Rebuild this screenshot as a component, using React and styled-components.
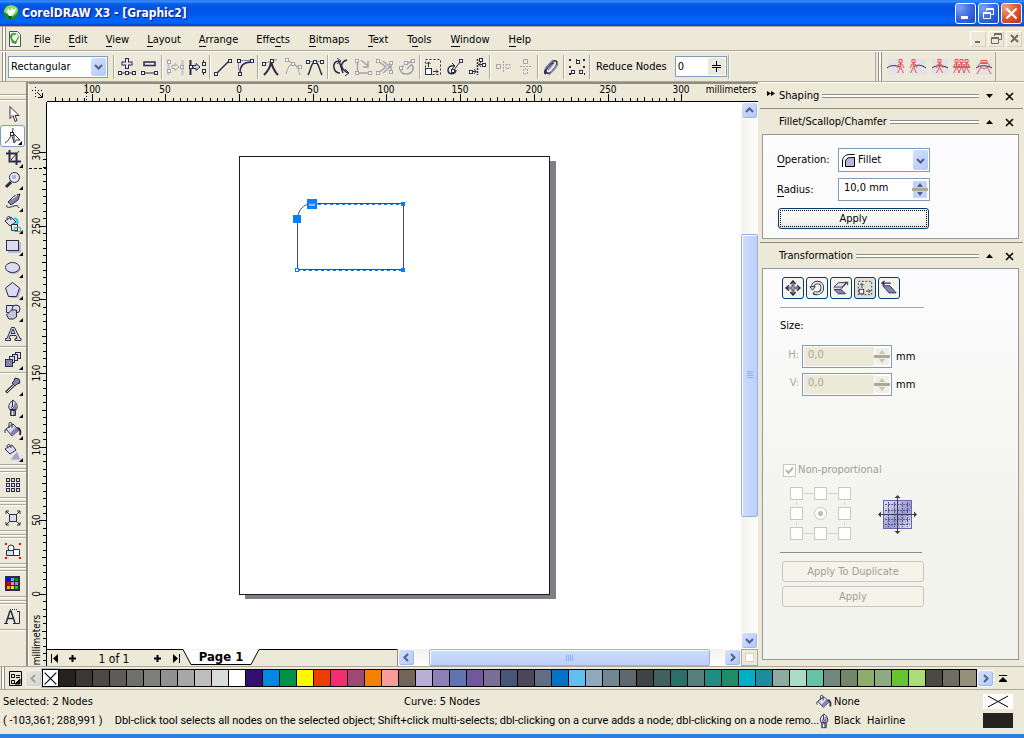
import React from 'react';
import styled, { createGlobalStyle, css } from 'styled-components';

const INK = '#2b2c46';
const MID = '#8484b4';
const PALE = '#dcdcf0';
const GREY = '#a3a2ac';

const GlobalStyle = createGlobalStyle`
  * {
    box-sizing: border-box;
  }
  body {
    margin: 0;
    background: #ece9d8;
  }
  body, button, input, select {
    font-family: 'DejaVu Sans Condensed', 'Noto Sans', sans-serif;
    font-size: 11px;
    line-height: 14px;
    color: #000;
  }
  button, input, select {
    margin: 0;
    padding: 0;
    border: 0;
    border-radius: 0;
    background: none;
    appearance: none;
    outline: none;
  }
  button {
    display: flex;
    align-items: center;
    justify-content: center;
  }
  u {
    text-decoration: none;
    border-bottom: 1px solid #000;
  }
  svg {
    display: block;
    flex: none;
  }
`;

const Shell = styled.div`
  height: 100vh;
  display: flex;
  flex-direction: column;
  overflow: hidden;
  background: #ece9d8;
`;

const TitleBar = styled.header`
  flex: none;
  height: 26px;
  padding: 0 2px 0 3px;
  display: flex;
  align-items: center;
  background: linear-gradient(#1c6fe8 0, #3a93ff 1px, #0a5ce4 4px, #0054e3 8px, #0058ea 14px, #0066ff 20px, #0062f8 23px, #003fc4 26px);
`;

const Title = styled.h1`
  flex: 1;
  margin: 0 0 0 3px;
  font-family: 'DejaVu Sans Condensed', 'Noto Sans', sans-serif;
  font-size: 12px;
  line-height: 16px;
  font-weight: bold;
  color: #fff;
  text-shadow: 1px 1px 1px #0f1089;
`;

const CaptionButton = styled.button`
  width: 21px;
  height: 21px;
  margin-left: 2px;
  border: 1px solid #fff;
  border-radius: 3px;
  background: ${(p) =>
    p.$danger
      ? 'radial-gradient(circle at 20% 20%, #f0a080, #dd5030 55%, #b8330f)'
      : 'radial-gradient(circle at 20% 20%, #7ea2f4, #3565e0 55%, #1b48c4)'};
`;

const MenuBar = styled.nav`
  flex: none;
  height: 25px;
  display: flex;
  align-items: center;
  border-top: 1px solid #aca899;
  border-bottom: 1px solid #aca899;
  padding-left: 2px;
`;

const Grip = styled.div`
  flex: none;
  align-self: stretch;
  width: 4px;
  border: solid #8f8c7f;
  border-width: 0 1px;
  background: #fff;
`;

const MenuItems = styled.div`
  flex: 1;
  display: flex;
  align-items: center;
  margin-left: 2px;
`;

const MenuItem = styled.button`
  padding: 5px 8px 3px 10px;
  &:first-of-type {
    padding-left: 12px;
  }
  &:nth-of-type(n + 7) {
    padding-left: 11px;
  }
`;

const MdiButton = styled.button`
  width: 16px;
  height: 16px;
  margin-right: 2px;
  border: 1px solid;
  border-color: #fff #d6d2c2 #d6d2c2 #fff;
`;

const ToolBar = styled.div`
  flex: none;
  height: 31px;
  display: flex;
  align-items: center;
  border-top: 1px solid #fff;
  border-bottom: 1px solid #aca899;
  padding-left: 2px;
`;

const SelectBox = styled.div`
  display: flex;
  align-items: center;
  width: ${(p) => p.$width};
  height: ${(p) => p.$height};
  padding: 1px 1px 1px 2px;
  border: 1px solid #7f9db9;
  background: #fff;
  select {
    flex: 1;
    min-width: 0;
    height: 100%;
    padding-left: ${(p) => (p.$icon ? 2 : 0)}px;
  }
`;

const DropArrow = styled.span`
  display: flex;
  align-items: center;
  justify-content: center;
  align-self: stretch;
  width: 15px;
  border-radius: 2px;
  background: linear-gradient(135deg, #d3e0fd, #b3c8f8);
`;

const Separator = styled.span`
  width: 2px;
  height: 24px;
  margin: 0 1px;
  border-left: 1px solid #aca899;
  border-right: 1px solid #fff;
`;

const ToolButton = styled.button`
  width: 22px;
  height: 22px;
`;

const ReduceLabel = styled.label`
  margin: 0 8px 0 4px;
  white-space: nowrap;
`;

const ReduceField = styled.div`
  display: flex;
  align-items: center;
  width: 52px;
  height: 21px;
  border: 1px solid #7f9db9;
  background: #fff;
  input {
    width: 30px;
    margin-left: 2px;
  }
  button {
    width: 17px;
    height: 17px;
    background: #ece9d8;
  }
`;

const NodeBar = styled.div`
  align-self: stretch;
  display: flex;
  align-items: center;
  margin-left: auto;
  margin-right: 28px;
  border-left: 1px solid #aca899;
  border-right: 1px solid #aca899;
  padding-left: 2px;
  button {
    height: 16px;
    border: solid #ece9d8;
    border-width: 0 3px;
    background: #e3e2e6;
  }
`;

const Main = styled.main`
  flex: 1;
  min-height: 0;
  display: flex;
`;

const ToolBox = styled.aside`
  flex: none;
  width: 28px;
  display: flex;
  flex-direction: column;
  border-right: 2px solid #8f8c7f;
  padding-top: 10px;
`;

const ToolGap = styled.div`
  flex: none;
  height: ${(p) => (p.$wide ? 11 : 4)}px;
  display: flex;
  flex-direction: column;
  justify-content: space-evenly;
  span {
    height: 2px;
    border-top: 1px solid #aca899;
    border-bottom: 1px solid #fff;
  }
`;

const Tool = styled.button`
  position: relative;
  flex: none;
  width: 25px;
  height: 22px;
  ${(p) =>
    p.$active &&
    css`
      border: 1px solid #7f9db9;
      border-radius: 3px;
      background: #fdfdfd;
    `}
`;

const Flyout = styled.span`
  position: absolute;
  right: 2px;
  bottom: 1px;
  border: 2px solid #000;
  border-top-color: transparent;
  border-left-color: transparent;
`;

const Workspace = styled.section`
  flex: 1;
  min-width: 0;
  display: flex;
  flex-direction: column;
  border-left: 1px solid #fff;
  border-top: 2px solid #8f8c7f;
`;

const Row = styled.div`
  display: flex;
  min-height: 0;
  flex: ${(p) => (p.$grow ? 1 : 'none')};
`;

const RulerCorner = styled.div`
  width: 18px;
  height: 18px;
  padding: 3px 3px;
`;

const TopRuler = styled.div`
  flex: 1;
  min-width: 0;
  height: 18px;
  overflow: hidden;
  border-bottom: 1px solid #000;
`;

const SideRuler = styled.div`
  width: 18px;
  overflow: hidden;
  border-right: 1px solid #000;
`;

const CanvasColumn = styled.div`
  flex: 1;
  min-width: 0;
  display: flex;
  flex-direction: column;
`;

const Canvas = styled.div`
  flex: 1;
  min-height: 0;
  min-width: 0;
  overflow: hidden;
  background: #fff;
`;

const ScrollTrack = styled.div`
  flex: ${(p) => (p.$vertical ? 'none' : 1)};
  width: ${(p) => (p.$vertical ? '17px' : 'auto')};
  display: flex;
  flex-direction: ${(p) => (p.$vertical ? 'column' : 'row')};
  background: ${(p) => (p.$vertical ? 'linear-gradient(90deg, #f3f1ec, #fefefb)' : 'linear-gradient(#f3f1ec, #fefefb)')};
`;

const ScrollButton = styled.button`
  flex: none;
  width: 17px;
  height: 17px;
  border: 1px solid #fff;
  border-radius: 3px;
  background: linear-gradient(135deg, #d3e0fd, #b3c8f8);
  box-shadow: inset -1px -1px 0 #a0b5e8;
  opacity: ${(p) => (p.disabled ? 0.5 : 1)};
  filter: ${(p) => (p.disabled ? 'grayscale(1)' : 'none')};
`;

const Thumb = styled.div`
  flex: ${(p) => p.$size};
  display: flex;
  align-items: center;
  justify-content: center;
  border: 1px solid #98b0e4;
  border-radius: 2px;
  background: linear-gradient(${(p) => (p.$vertical ? '90deg' : '180deg')}, #cddbff, #bdcffa);
  box-shadow: inset 1px 1px 0 #fff;
`;

const Space = styled.div`
  flex: ${(p) => p.$size};
`;

const PageBar = styled.div`
  flex: none;
  height: 17px;
  display: flex;
`;

const PageNav = styled.div`
  flex: none;
  width: 351px;
  display: flex;
  align-items: stretch;
  border-right: 1px solid #8f8c7f;
`;

const NavCell = styled.button`
  width: ${(p) => p.$width}px;
  border-top: 1px solid #000;
`;

const PageCount = styled.span`
  width: 64px;
  padding-top: 2px;
  text-align: center;
  font-size: 12px;
  border-top: 1px solid #000;
`;

const PageTab = styled.button`
  position: relative;
  width: 76px;
  height: 16px;
  font-size: 13px;
  font-weight: bold;
  svg {
    position: absolute;
    inset: 0;
  }
  span {
    position: relative;
  }
`;

const NavFill = styled.span`
  flex: 1;
  border-top: 1px solid #000;
`;

const Navigator = styled.button`
  width: 17px;
  border: 1px solid #aca899;
  span {
    width: 9px;
    height: 9px;
    background: #fff;
    border: 1px solid #d6d2c2;
  }
`;

const Docker = styled.aside`
  flex: none;
  width: 264px;
  margin-left: 2px;
  display: flex;
  flex-direction: column;
  padding-top: 1px;
  border-top: 1px solid #fff;
`;

const DockSection = styled.section`
  display: flex;
  flex-direction: column;
  flex: ${(p) => (p.$grow ? 1 : 'none')};
  margin-right: 1px;
  padding-right: 4px;
  border-bottom: ${(p) => (p.$grow ? 0 : '1px solid #8f8c7f')};
  padding-bottom: ${(p) => (p.$pad ? 3 : 0)}px;
  margin-bottom: ${(p) => (p.$grow ? 6 : 1)}px;
`;

const DockHeader = styled.div`
  display: flex;
  align-items: center;
  height: 24px;
  padding-left: 19px;
  h2 {
    margin: 0;
    font-size: 11px;
    font-weight: normal;
  }
  button {
    width: 20px;
    height: 18px;
  }
`;

const Chevrons = styled.span`
  width: 12px;
  margin-left: -12px;
  height: 10px;
`;

const Rule = styled.span`
  flex: 1;
  height: 4px;
  margin-left: 3px;
  border: solid #8f8c7f;
  border-width: 1px 0;
  background: #fff;
`;

const DockBody = styled.div`
  flex: ${(p) => (p.$grow ? 1 : 'none')};
  margin-left: 2px;
  border: 1px solid #919b9c;
  background: linear-gradient(#fcfcfe, ${(p) => (p.$grow ? '#f3f3ee 65%' : '#fafafa')});
`;

const FilletForm = styled.form`
  padding: 13px 0 9px 14px;
  display: grid;
  grid-template-columns: 61px 92px;
  row-gap: 6px;
  align-items: center;
  button {
    grid-column: 1 / 3;
  }
`;

const Spin = styled.div`
  display: flex;
  align-items: center;
  width: ${(p) => p.$width}px;
  height: 23px;
  padding: 1px;
  border: 1px solid #7f9db9;
  background: #fff;
  input {
    flex: 1;
    min-width: 0;
    height: 19px;
    padding: 0 0 4px 4px;
    background: ${(p) => (p.$off ? '#ece9d8' : '#fff')};
    color: ${(p) => (p.$off ? '#aca899' : '#000')};
  }
`;

const PushButton = styled.button`
  height: 21px;
  border: 1px solid #003c74;
  border-radius: 3px;
  background: linear-gradient(#fff, #f3f3ef 70%, #e2e0d6);
  margin: 1px 1px 0 1px;
  span {
    flex: 1;
    margin: 1px;
    border: 1px dotted #000;
    line-height: 15px;
  }
  &:disabled {
    width: 142px;
    margin: 0 0 4px 2px;
    border-color: #c9c7ba;
    background: #f5f4ea;
    color: #a1a192;
  }
`;

const TransformBody = styled.div`
  padding: 7px 0 0 17px;
`;

const ModeRow = styled.div`
  display: flex;
  gap: 2px;
  padding: 1px 0 8px 2px;
  margin-bottom: 11px;
  width: 144px;
  border-bottom: 1px solid #aca899;
`;

const ModeButton = styled.button`
  width: 22px;
  height: 22px;
  border: 1px solid #003c74;
  border-radius: 3px;
  background: ${(p) => (p.$active ? '#e3e1d6' : '#f5f5f0')};
`;

const SizeRow = styled.div`
  display: grid;
  grid-template-columns: 22px 94px auto;
  align-items: center;
  margin-top: ${(p) => (p.$first ? 12 : 5)}px;
  label {
    padding: 0 3px 3px 0;
    text-align: right;
    color: #aca899;
  }
`;

const Check = styled.label`
  display: flex;
  align-items: center;
  gap: 2px;
  margin: 67px 0 10px 3px;
  color: #a1a192;
`;

const Box = styled.input`
  width: 13px;
  height: 13px;
  border: 1px solid #cac8bb;
  background: #fff;
`;

const CheckBox = styled.span`
  display: grid;
  place-items: center;
  input, svg {
    grid-area: 1 / 1;
  }
`;

const AnchorRow = styled.div`
  display: flex;
  align-items: center;
  gap: 27px;
  width: 142px;
  padding: 0 0 12px 10px;
  border-bottom: 1px solid #8f8c7f;
  margin-bottom: 8px;
`;

const AnchorGrid = styled.div`
  display: grid;
  grid-template-columns: 13px 11px 13px 11px 13px;
  grid-template-rows: 13px 7px 13px 7px 13px;
  place-items: center;
`;

const Link = styled.span`
  width: ${(p) => (p.$h ? 9 : 1)}px;
  height: ${(p) => (p.$h ? 1 : 3)}px;
  background: #d6d2c2;
`;

const Radio = styled.input`
  width: 13px;
  height: 13px;
  border: 1px solid #cac8bb;
  border-radius: 50%;
  background: radial-gradient(circle, #bdbcb4 2px, #fff 3px);
`;

const PaletteBar = styled.div`
  flex: none;
  height: 24px;
  display: flex;
  align-items: center;
  border-top: 1px solid #aca899;
  border-bottom: 1px solid #aca899;
  padding-left: 1px;
`;

const PaletteMenu = styled.button`
  width: 17px;
  height: 17px;
  margin: 0 1px 0 2px;
`;

const Swatches = styled.div`
  flex: 1;
  display: flex;
  height: 18px;
  border: solid #000;
  border-width: 1px 0;
`;

const Swatch = styled.button`
  flex: 1;
  height: 16px;
  border-right: 1px solid #000;
  background: ${(p) => p.$color};
`;

const NoColor = styled.button`
  width: 17px;
  height: 18px;
  border: 1px solid #000;
  background: #fff;
  box-shadow: 0 0 0 1px #a9bfd6;
`;

const PaletteEnd = styled.button`
  width: 30px;
  padding-right: 12px;
`;

const StatusBar = styled.footer`
  flex: none;
  height: 48px;
  display: grid;
  grid-template-columns: 401px 1fr 208px;
  grid-template-rows: 19px 19px;
  align-items: center;
  padding-top: 2px;
  padding-left: 3px;
  border-bottom: 4px solid #2f7de0;
`;

const Hint = styled.span`
  grid-column: 1 / 3;
  display: flex;
  gap: 12px;
  font-family: Roboto, 'DejaVu Sans Condensed', sans-serif;
  white-space: nowrap;
`;

const Fill = styled.span`
  display: flex;
  align-items: center;
  gap: 2px;
  i {
    margin-left: auto;
    margin-right: 11px;
    width: 30px;
    height: 15px;
    background: ${(p) => p.$color};
  }
`;

// 18px line icon, coordinates sit on half pixels so that strokes stay crisp
const Icon = ({ children, size = 18, color = INK, w = 1 }) => (
  <svg width={size} height={size} viewBox="0 0 18 18" fill="none" stroke={color} strokeWidth={w} aria-hidden="true">
    {children}
  </svg>
);

const Dot = ({ x, y, fill = '#fff' }) => <rect x={x - 1} y={y - 1} width="3" height="3" fill={fill} transform="translate(-.5 -.5)" />;

const Arrow = ({ dir = 'down', color = '#4d6185', size = 9 }) => {
  const turn = { down: 0, left: 90, up: 180, right: 270 }[dir];
  return (
    <svg width={size} height={size} viewBox="0 0 9 9" aria-hidden="true">
      <path d="M1 3l3.500 3.500L8 3" fill="none" stroke={color} strokeWidth="2" transform={`rotate(${turn} 4.500 4.500)`} />
    </svg>
  );
};

const Triangle = ({ up }) => (
  <svg width="7" height="4" viewBox="0 0 7 4" aria-hidden="true">
    <path d={up ? 'M0 4h7L3.500 0z' : 'M0 0h7L3.500 4z'} />
  </svg>
);

const Cross = ({ size = 9, color = '#000', w = 2 }) => (
  <svg width={size} height={size} viewBox="0 0 9 9" aria-hidden="true">
    <path d="M1 1l7 7M8 1L1 8" stroke={color} strokeWidth={w} />
  </svg>
);

const Restore = ({ color = '#fff' }) => (
  <svg width="11" height="11" viewBox="0 0 11 11" fill="none" stroke={color} aria-hidden="true">
    <path d="M3.500 3V.5h7v6H8M3 1.500h8M.5 4.500h7v6h-7zM0 5.500h8" />
  </svg>
);

const SpinArrows = ({ off }) => (
  <svg width="16" height="17" viewBox="0 0 16 17" aria-hidden="true">
    <rect x="1" width="14" height="8" rx="1" fill={off ? '#f0efe6' : '#c3d3fd'} />
    <rect x="1" y="9" width="14" height="8" rx="1" fill={off ? '#f0efe6' : '#c3d3fd'} />
    <path d="M5 6l3-4 3 4zM5 11l3 4 3-4z" fill={off ? '#c5c3b8' : '#4d6185'} />
    <path d="M0 8.500h16" stroke="#aca899" strokeWidth="3" />
  </svg>
);

const Bucket = () => (
  <>
    <path d="M2 8l7-5 6 6-7 6z" fill={PALE} />
    <path d="M8 15l7-6-3-3-6 6z" fill={MID} stroke="none" />
    <path d="M5 7V2.500C5 1 8 1 8 3v4" />
    <path d="M13 7c3 0 4 3 3 7" strokeWidth="2" />
    <path d="M2 8c-1 1-2 3-.5 4" />
  </>
);

const Nib = () => (
  <>
    <path d="M9 1c-4 3-5 6-3.500 9.500h7C14 7 13 4 9 1z" fill={PALE} />
    <path d="M11 4.500v5.500" stroke={MID} strokeWidth="2" />
    <path d="M8.500 2v6" />
    <circle cx="8.500" cy="8.500" r="1" fill="#fff" />
    <path d="M6.500 11.500h5v5h-5z" fill={MID} />
    <path d="M8.500 12v4" stroke="#fff" />
  </>
);

const nodeIcons = [
  [
    ['Add node', <><path d="M9 0v11M3.500 5.500h11" strokeWidth="4" /><path d="M9 1v9M4.500 5.500h9" stroke="#e5e5f5" strokeWidth="2" /><path d="M2 15h14" /><Dot x={2} y={15} /><Dot x={9} y={15} /><Dot x={16} y={15} /></>],
    ['Delete node', <><rect x="4" y="4" width="11" height="3.500" fill="#e5e5f5" strokeWidth="1.500" /><path d="M3 15h13" /><Dot x={3} y={15} /><Dot x={16} y={15} /></>],
  ],
  [
    ['Join two nodes', <><path d="M2.500 1v16M16.500 2v15" strokeWidth="2" stroke="#c4c3cc" /><Dot x={3} y={4} /><Dot x={3} y={13} /><Dot x={16} y={9} /><path d="M6 7.500h3v-2l4 3.500-4 3.500v-2H6z" /></>, true],
    ['Break curve', <><path d="M2.500 2v15" strokeWidth="2" /><path d="M15.500 2v4M15.500 11v6" /><Dot x={3} y={9} /><path d="M5 7.500h3v-2l4 3.500-4 3.500v-2H5z" fill="#cfcfe6" /><Dot x={16} y={6} /><Dot x={16} y={13} /></>],
  ],
  [
    ['To line', <><path d="M3 15L15 3" strokeWidth="1.500" /><Dot x={2} y={16} /><Dot x={16} y={3} /></>],
    ['To curve', <><path d="M2 2.500h14M2.500 3v9" stroke={MID} /><path d="M4 15C4 9 7 4 15 4" strokeWidth="1.500" /><Dot x={4} y={16} /><Dot x={16} y={3} /><Dot x={3} y={3} /></>],
  ],
  [
    ['Cusp', <><path d="M2 17C6 13 9 8 9 3c1 5 3 10 7 14" strokeWidth="2" /><path d="M2 5.500l13-4" stroke={MID} /><Dot x={10} y={3} /><Dot x={2} y={6} /></>],
    ['Smooth', <><path d="M2 16C4 9 6 6 9 6s5 4 7 11M3 2l13 8" /><Dot x={9} y={6} /><Dot x={3} y={2} /><Dot x={16} y={9} /></>, true],
    ['Symmetrical', <><path d="M2 17C5 12 5 4 9 4s4 8 7 13" strokeWidth="1.500" /><path d="M2 3.500h14" stroke={MID} /><Dot x={9} y={4} /><Dot x={2} y={4} /><Dot x={16} y={4} /></>],
  ],
  [
    ['Reverse direction', <><path d="M7 3C3 3 1 6 2 10s3 5 6 5M7 3l4 12M15 2c-5 1-7 6-4 9s3 4 6 4" strokeWidth="1.500" /><path d="M5 0l4 3-4 3M13 11l4 4-4 3" /></>],
    ['Extend to close', <><path d="M3.500 3v12h12M7 2l7 6M14 3v6H9" strokeWidth="1.500" /><Dot x={3} y={3} /><Dot x={3} y={15} /><Dot x={16} y={15} /></>, true],
    ['Extract subpath', <><path d="M2 3l8 6-8 6M7 3l7 6-7 6M15 5v10" strokeWidth="1.500" /><Dot x={2} y={3} /><Dot x={15} y={5} /><Dot x={2} y={15} /><Dot x={15} y={14} /></>, true],
    ['Auto-close', <><path d="M6 8c-6 0-4 8 2 8 6 0 9-5 6-9M8 6l6-3M9 11l5-5" strokeWidth="1.500" /><Dot x={8} y={5} /><Dot x={15} y={3} /><Dot x={3} y={10} /></>, true],
  ],
  [
    ['Stretch nodes', <><path d="M1.500 1.500h15v15h-15z" strokeDasharray="2 2" /><rect x="1.500" y="10.500" width="6" height="6" fill="#fff" /><path d="M4.500 9V4M2.500 6l2-2 2 2M9 13.500h5M12 11.500l2 2-2 2" /></>],
    ['Rotate nodes', <><path d="M10 12c-1 5-8 5-8 0 0-3 3-5 6-4" strokeWidth="1.500" /><path d="M6 5l3 3-3 3M8 12l6-8" /><Dot x={15} y={3} /><Dot x={7} y={13} /></>],
    ['Align nodes', <><path d="M9.500 1v16" strokeDasharray="2 1" strokeWidth="1.500" /><path d="M3 13.500h5M10 6.500h5M13 4l-2 2.500 2 2.500M6 11l2 2.500L6 16" /><Dot x={3} y={14} /><Dot x={16} y={7} /><Dot x={13} y={2} /></>],
  ],
  [
    ['Horizontal reflect', <><path d="M2.500 6.500h4v4h-4z" /><path d="M9.500 3v11M12 6.500h4v4h-4z" strokeDasharray="2 1" /></>, true],
    ['Vertical reflect', <><path d="M7.500 1.500h4v4h-4z" /><path d="M4 8.500h11M7.500 11v5h4v-5z" strokeDasharray="2 1" /></>, true],
  ],
  [['Elastic mode', <><path d="M4 16c-5-2 6-15 10-13s-5 14-9 12 4-10 7-10" strokeWidth="1.500" /><path d="M3 11l8-9M7 17l9-11M6 12l5-6" stroke={MID} strokeWidth="1.500" /></>]],
  [['Select all nodes', <><path d="M1 2h2M8 2h1M15 2h2M1 9h2M15 9h2M1 16h2M16 16h1" strokeWidth="2" /><Dot x={10} y={4} /><Dot x={5} y={14} /><Dot x={13} y={14} /></>]],
];

const man = (x, n) => <path key={n} d={`M${x} 1.500h3v3h-3zM${x + 1.5} 5v4l-3 6M${x + 1.5} 9l3 6M${x - 2} 10l2-4h3l2 4`} stroke="#f0504c" />;

const peopleIcons = [
  ['Node left', <><path d="M0 10c3-3 9-3 13-1" />{man(12, 1)}</>],
  ['Node right', <><path d="M4 9c5-3 9-2 13 1" />{man(3, 1)}</>],
  ['Node centre', <><path d="M1 10c4-3 11-3 16 0" />{man(7, 1)}</>],
  ['Node group', <><path d="M1 9h16" />{[2, 7, 12].map(man)}</>],
  ['Node arch', <><path d="M1 10c4-3 11-3 16 0" /><path d="M2 16l4-7 3 2 3-2 4 7M3 8c2-5 10-5 12 0M6 2.500h6v3H6z" stroke="#f0504c" /></>],
];

const tools = [
  ['Pick', <path d="M6 1.500v12l3-3 2 6 2-1-2-5h4z" fill="#fff" />],
  ['Shape', <><path d="M1 16C5 14 9 6 9 1M8 7c0 4 1 6 3 9" /><path d="M10 7l6 6h-4l-2 3z" fill="#fff" /><Dot x={8} y={7} /></>, true, true],
  ['Crop', <><path d="M5.500 1v11.500H17M2 4.500h10.500V16" strokeWidth="2" /><path d="M7 11l8-9" /></>, true],
  ['Zoom', <><path d="M2 16l5-5" strokeWidth="3" /><circle cx="10.500" cy="6.500" r="5" fill={PALE} /><circle cx="10" cy="6" r="3" fill="#b4b4d4" stroke="#fff" /></>, true],
  ['Freehand', <><path d="M4 9l6-6 6-2-2 6-7 5z" fill={MID} /><path d="M8 6l5-4" stroke="#fff" /><path d="M3 12c-2 4 4 2 7 1s4 0 5 2" /></>, true],
  ['Smart fill', <><path d="M1 6l6-4 5 5-6 4z" fill={PALE} /><path d="M3 4c0-4 4-3 4 1" /><path d="M10 3c4 1 4 3 3 6" stroke="#00d5ee" strokeWidth="2" /><path d="M7.500 9.500h6v6h-6z" /><path d="M10.500 12.500h6v4h-6z" stroke="#00c5de" /></>, true],
  ['Rectangle', <><path d="M4 15h12V5" stroke="#b9b9d6" strokeWidth="2" /><rect x="2.500" y="3.500" width="12" height="10" fill={PALE} /></>, true],
  ['Ellipse', <><ellipse cx="9.500" cy="10" rx="7" ry="5" fill="#b0b0d0" stroke="none" /><ellipse cx="8.500" cy="8.500" rx="7" ry="5" fill={PALE} /></>, true],
  ['Polygon', <><path d="M9.500 3l8 5-3 9h-8z" fill="#b9b9d6" stroke="none" /><path d="M8.500 1.500l7 5.500-3 8.500h-8L1.500 7z" fill={PALE} /></>, true],
  ['Basic shapes', <><path d="M2.500 2.500h8v7h-8z" fill={PALE} /><circle cx="12" cy="6" r="4" fill={PALE} /><path d="M2.500 12l5-5h5v7l-3 2H5z" fill="#c3c3de" /></>, true],
  ['Text', <><path d="M1.500 15.500h5v-2H5l1-3h6l1 3h-2v2h6v-2h-1L10.500 2.500h-3L3 13.500H1.500zM7 8.500h4L9 4z" fill={PALE} /></>],
  null,
  ['Blend', <>{[[11, 1], [8, 3], [5, 5]].map(([x, y]) => <rect key={x} x={x + 0.5} y={y + 0.5} width="5" height="6" fill={PALE} />)}<rect x="1.500" y="8.500" width="7" height="7" fill={MID} /></>, true],
  null,
  ['Eyedropper', <><path d="M2 15.500L10 8" strokeWidth="3" /><path d="M3 15l7-7" stroke="#fff" /><path d="M8 6l2-2 1-3 4 1 1 4-3 1-2 2z" fill={MID} /></>, true],
  ['Outline', <Nib />, true],
  ['Fill', <Bucket />, true],
  ['Interactive fill', <><path d="M1 6l7-4 4 5-6 4z" fill={PALE} /><path d="M3 4c0-4 4-3 4 1" /><path d="M6 17h11L13 8z" fill="#a4a4cc" stroke={PALE} /></>, true],
  'wide',
  ['Table', <>{[2, 7, 12].map((x) => [2, 7, 12].map((y) => <rect key={x + '-' + y} x={x + 0.5} y={y + 0.5} width="3" height="3" fill={PALE} />))}</>],
  'wide',
  ['Fit', <><path d="M2 5V2h3M2 2l3 3M13 2h3v3M16 2l-3 3M2 13v3h3M2 16l3-3M13 16h3v-3M16 16l-3-3" /><rect x="5.500" y="5.500" width="7" height="7" fill={PALE} /></>],
  'wide',
  ['Snap', <><path d="M1 2h2M15 2h2M1 16h2M15 16h2" stroke="#f00" strokeWidth="2" /><circle cx="7" cy="6" r="3" fill="#fff" /><path d="M2.500 8.500h7v5h-7z" fill={PALE} /><path d="M9.500 7.500h6v6h-6z" fill="#fff" /></>],
  'wide',
  ['Colors', <><rect x="1.500" y="1.500" width="14" height="14" fill={INK} />{['#00f', '#3bc4f2', '#090', '#e00', '#f7a', '#98c', '#fa0', '#fd0', '#0d0'].map((c, i) => <rect key={c} x={3 + (i % 3) * 4} y={3 + Math.floor(i / 3) * 4} width="3" height="3" fill={c} stroke="none" />)}</>],
  'wide',
  ['Text frame', <><path d="M2 15L6 3h1l4 12M4 10.500h5" strokeWidth="1.500" /><path d="M0 15.500h4M9 15.500h4M13 3.500h2.500v12H13" /><path d="M6 1.500h8" strokeDasharray="1 1" /></>],
];

const menus = [['F', 'ile'], ['E', 'dit'], ['V', 'iew'], ['L', 'ayout'], ['A', 'rrange'], ['Effe', 'c', 'ts'], ['B', 'itmaps'], ['T', 'ext'], ['T', 'o', 'ols'], ['W', 'indow'], ['H', 'elp']];

const colors = `#26221e #3b3734 #4d4946 #5f5b59 #6f6f6c #7f7f7d #8f9192 #a7a7a7 #bfbebc #dadcdb #ffffff
  #330f70 #0088e3 #009246 #fff900 #ec3e00 #f02d70 #a14773 #f48100 #fa9d98 #736458
  #b8aed6 #8f7fb7 #6074b2 #72579c #7b6d94 #475577 #4d4859 #5f6d85 #0073c7 #60bff0 #8fa9bd #738793 #5e686e
  #404347 #42605f #2a7069 #577f7c #208d83 #1c8c69 #00aec6 #1e8b9f #8faaa0 #a9dcc8 #65c2a4 #73887d #728769
  #8cad6b #8cab85 #66c430 #a9dd7c #4b4840 #6f6d60 #93917c`.split(/\s+/);

// 50 mm on the rulers
const STEP = 73.7;

const ticks = (origin, length) => {
  const list = [];
  for (let i = -60; i <= 60; i += 1) {
    const at = Math.round(origin + (i * STEP) / 10);
    if (at > 0 && at < length) list.push({ at, size: i % 10 === 0 ? 7 : i % 5 === 0 ? 4 : 3 });
  }
  return list;
};

const HorizontalRuler = () => (
  <svg width="710" height="17" fontSize="10" textAnchor="middle">
    {ticks(192, 710).map(({ at, size }) => (
      <path key={at} d={`M${at + 0.5} ${17 - size}v${size}`} stroke="#000" />
    ))}
    <path d="M39.500 0v17" stroke="#000" strokeDasharray="1 2" />
    {[-2, -1, 0, 1, 2, 3, 4, 5, 6].map((n) => (
      <text key={n} x={Math.round(192 + n * STEP)} y="9">{Math.abs(n * 50)}</text>
    ))}
    <text x="684" y="9">millimeters</text>
  </svg>
);

const VerticalRuler = () => (
  <svg width="17" height="564" fontSize="10" textAnchor="middle">
    {ticks(492, 564).map(({ at, size }) => (
      <path key={at} d={`M${17 - size} ${at + 0.5}h${size}`} stroke="#000" />
    ))}
    <path d="M0 66.500h17" stroke="#000" strokeDasharray="3 2" />
    {[0, 1, 2, 3, 4, 5, 6].map((n) => (
      <text key={n} transform={`translate(11 ${Math.round(492 - n * STEP)}) rotate(-90)`}>{n * 50}</text>
    ))}
    <text transform="translate(11 538) rotate(-90)">millimeters</text>
  </svg>
);

const Drawing = () => (
  <svg width="694" height="546" fill="none">
    <path d="M503 59h6v438H198v-5h305z" fill="#7f7f87" />
    <rect x="192.500" y="54.500" width="310" height="438" fill="#fff" stroke="#1c1c1c" />
    <path d="M265 101.500h91.500v66h-106v-50c0-9 6-16 15-16" stroke="#4b4b58" />
    <path d="M265 102.500h91M250 168.500h106" stroke="#0080ff" strokeDasharray="3 3" />
    <path d="M246 113h8v8h-8zM260 97h10v10h-10zM354 100h4v4h-4zM354 166h4v4h-4z" fill="#0080ff" />
    <path d="M262 101.500h8" stroke="#d05080" />
    <path d="M262 103h6" stroke="#fff" />
    <rect x="248.500" y="166.500" width="3" height="3" fill="#fff" stroke="#0080ff" />
  </svg>
);

const ThumbGrip = ({ vertical }) => (
  <svg width="8" height="8" aria-hidden="true">
    <path d={vertical ? 'M1 .5h6M1 2.500h6M1 4.500h6M1 6.500h6' : 'M.5 1v6M2.500 1v6M4.500 1v6M6.500 1v6'} stroke="#8cb0f8" />
  </svg>
);

const Balloon = () => (
  <svg width="16" height="18" viewBox="0 0 16 18" aria-hidden="true">
    <circle cx="8" cy="8.500" r="7.500" fill="#1d8a28" />
    <path d="M1 8c0-8 11-9 14-3 0 4-3 6-6 8z" fill="#8bdc66" />
    <path d="M4 8l1-4 2 3 2-4 1 3 3-2-1 4-4 4H6z" fill="#fff" />
    <path d="M5 12h4l-1 3H6z" fill="#0c5a18" />
  </svg>
);

const DocIcon = () => (
  <svg width="14" height="18" viewBox="0 0 14 18" aria-hidden="true">
    <path d="M1.500 1.500h8l3 3v12h-11z" fill="#fff" stroke="#3f5a4c" />
    <path d="M2 7c0-6 8-5 9 0l-3 7-4-1z" fill="#3f9a3a" />
    <path d="M4 8l1-4 2 2 1-3 2 3-2 5H6z" fill="#f2fbea" />
  </svg>
);

const Header = ({ title, up, chevrons }) => (
  <DockHeader>
    {chevrons && (
      <Chevrons>
        <svg width="8" height="5" viewBox="0 0 8 5"><path d="M0 0l4 2.500L0 5zM4 0l4 2.500L4 5z" /></svg>
      </Chevrons>
    )}
    <h2>{title}</h2>
    <Rule />
    <button aria-label={`Roll ${title}`}><Triangle up={up} /></button>
    <button aria-label={`Close ${title}`}><Cross size={9} w={1.5} /></button>
  </DockHeader>
);

const anchorCells = ['b', 'h', 'b', 'h', 'b', 'v', '', '', '', 'v', 'b', '', 'r', '', 'b', 'v', '', '', '', 'v', 'b', 'h', 'b', 'h', 'b'];

const AnchorCell = ({ kind, index }) => {
  if (kind === 'b') return <Box type="checkbox" disabled aria-label={`Anchor ${index}`} />;
  if (kind === 'r') return <Radio type="radio" disabled aria-label="Anchor centre" />;
  if (kind) return <Link $h={kind === 'h'} />;
  return <span />;
};

const modes = [
  ['Position', <><path d="M9 2v14M2 9h14" strokeWidth="3" /><path d="M6 4.500L9 1l3 3.500M6 13.500L9 17l3-3.500M4.500 6L1 9l3.500 3M13.500 6L17 9l-3.500 3" strokeWidth="1.500" /><path d="M9 3v12M3 9h12" stroke="#d5d5ec" /></>],
  ['Rotate', <><path d="M4 8c1-7 11-7 11 1 0 6-7 7-10 5" strokeWidth="4" /><path d="M4 8c1-7 11-7 11 1 0 6-6 7-9 5" stroke="#e5e5f5" strokeWidth="2" /><path d="M1 7.500h6l-3 4z" fill={PALE} /></>],
  ['Scale and mirror', <><path d="M1 8l5-5h9l-5 5z" fill={PALE} /><path d="M1 10.500h8l5 5H6z" fill={MID} /><path d="M9 10l8-8M13 2.500h3.500V6" /></>],
  ['Size', <><path d="M1.500 1.500h15v15h-15z" strokeDasharray="2 2" /><rect x="2.500" y="10.500" width="5" height="5" fill="#fff" /><path d="M5.500 9V4M3.500 6l2-2 2 2M10 12.500h5M13 10.500l2 2-2 2" /></>],
  ['Skew', <><path d="M2 6.500h8l7 8H9z" fill={MID} /><path d="M1 3.500h10M4 1L1 3.500 4 6" strokeWidth="1.500" /></>],
];

const App = () => (
  <>
    <GlobalStyle />
    <Shell>
      <TitleBar>
        <Balloon />
        <Title>CorelDRAW X3 - [Graphic2]</Title>
        <CaptionButton aria-label="Minimize">
          <svg width="11" height="11"><path d="M1 9.500h7" stroke="#fff" strokeWidth="3" /></svg>
        </CaptionButton>
        <CaptionButton aria-label="Restore"><Restore /></CaptionButton>
        <CaptionButton $danger aria-label="Close"><Cross size={13} color="#fff" w={1.5} /></CaptionButton>
      </TitleBar>
      <MenuBar>
        <Grip />
        <MenuItems>
          <DocIcon />
          {menus.map((parts) => (
            <MenuItem key={parts.join('')}>
              <span>
                {parts.length === 3 ? parts[0] : ''}
                <u>{parts.length === 3 ? parts[1] : parts[0]}</u>
                {parts[parts.length - 1]}
              </span>
            </MenuItem>
          ))}
        </MenuItems>
        <MdiButton aria-label="Minimize document"><svg width="10" height="10"><path d="M2 8h5" stroke="#6d6b62" strokeWidth="2" /></svg></MdiButton>
        <MdiButton aria-label="Restore document"><Restore color="#6d6b62" /></MdiButton>
        <MdiButton aria-label="Close document"><Cross color="#6d6b62" /></MdiButton>
      </MenuBar>
      <ToolBar>
        <Grip />
        <Space $size="0 0 2px" />
        <SelectBox $width="100px" $height="22px">
          <select aria-label="Selection mode"><option>Rectangular</option></select>
          <DropArrow><Arrow /></DropArrow>
        </SelectBox>
        <Space $size="0 0 4px" />
        {nodeIcons.map((group, n) => (
          <React.Fragment key={n}>
            <Separator />
            {group.map(([label, art, off]) => (
              <ToolButton key={label} aria-label={label} disabled={off}>
                <Icon color={off ? GREY : INK}>{art}</Icon>
              </ToolButton>
            ))}
          </React.Fragment>
        ))}
        <Separator />
        <ReduceLabel htmlFor="reduce">Reduce Nodes</ReduceLabel>
        <ReduceField>
          <input id="reduce" defaultValue="0" />
          <button aria-label="Reduce slider">
            <svg width="9" height="11"><path d="M0 4.500h9M0 6.500h9M4.500 0v4M4.500 7v4" stroke="#000" /></svg>
          </button>
        </ReduceField>
        <Separator />
        <NodeBar>
          <Grip />
          <Space $size="0 0 3px" />
          {peopleIcons.map(([label, art]) => (
            <ToolButton key={label} aria-label={label}><Icon>{art}</Icon></ToolButton>
          ))}
        </NodeBar>
      </ToolBar>
      <Main>
        <ToolBox>
          <ToolGap $wide><span /><span /></ToolGap>
          {tools.map((tool, n) => {
            if (!tool) return <ToolGap key={n}><span /></ToolGap>;
            if (tool === 'wide') return <ToolGap key={n} $wide><span /><span /><span /></ToolGap>;
            const [label, art, flyout, active] = tool;
            return (
              <Tool key={label} aria-label={label} $active={active}>
                <Icon>{art}</Icon>
                {flyout && <Flyout />}
              </Tool>
            );
          })}
          <ToolGap><span /></ToolGap>
        </ToolBox>
        <Workspace>
          <Row>
            <RulerCorner>
              <svg width="12" height="12" viewBox="0 0 12 12" stroke="#000" fill="none">
                <path d="M3.500 0v12M0 3.500h12" strokeDasharray="1 2" />
                <path d="M5 5l5 5M10.500 6v4.500H6" />
              </svg>
            </RulerCorner>
            <TopRuler><HorizontalRuler /></TopRuler>
          </Row>
          <Row $grow>
            <SideRuler><VerticalRuler /></SideRuler>
            <CanvasColumn>
              <Row $grow>
                <Canvas><Drawing /></Canvas>
                <ScrollTrack $vertical>
                  <ScrollButton aria-label="Scroll up"><Arrow dir="up" /></ScrollButton>
                  <Space $size={115} />
                  <Thumb $size={283} $vertical><ThumbGrip vertical /></Thumb>
                  <Space $size={115} />
                  <ScrollButton aria-label="Scroll down"><Arrow /></ScrollButton>
                </ScrollTrack>
              </Row>
              <PageBar>
                <PageNav>
                  <NavCell $width={16} aria-label="First page"><svg width="8" height="9"><path d="M0 0h1v9H0zM7 0v9L2 4.500z" /></svg></NavCell>
                  <NavCell $width={19} aria-label="Add page before"><svg width="9" height="9"><path d="M4.500 1v7M1 4.500h7" stroke="#000" strokeWidth="2" /></svg></NavCell>
                  <PageCount>1 of 1</PageCount>
                  <NavCell $width={23} aria-label="Add page after"><svg width="9" height="9"><path d="M4.500 1v7M1 4.500h7" stroke="#000" strokeWidth="2" /></svg></NavCell>
                  <NavCell $width={14} aria-label="Last page"><svg width="8" height="9"><path d="M7 0h1v9H7zM1 0v9l5-4.500z" /></svg></NavCell>
                  <PageTab>
                    <svg width="76" height="16"><path d="M0 .5l8 15h60l8-15" fill="#fff" stroke="#000" /></svg>
                    <span>Page 1</span>
                  </PageTab>
                  <NavFill />
                </PageNav>
                <ScrollTrack>
                  <ScrollButton aria-label="Scroll left"><Arrow dir="left" /></ScrollButton>
                  <Space $size={14} />
                  <Thumb $size={280}><ThumbGrip /></Thumb>
                  <Space $size={14} />
                  <ScrollButton aria-label="Scroll right"><Arrow dir="right" /></ScrollButton>
                </ScrollTrack>
                <Navigator aria-label="Navigator"><span /></Navigator>
              </PageBar>
            </CanvasColumn>
          </Row>
        </Workspace>
        <Docker>
          <DockSection><Header title="Shaping" chevrons /></DockSection>
          <DockSection $pad>
            <Header title="Fillet/Scallop/Chamfer" up />
            <DockBody>
              <FilletForm onSubmit={(e) => e.preventDefault()}>
                <label htmlFor="operation"><u>O</u>peration:</label>
                <SelectBox $width="92px" $height="24px" $icon>
                  <svg width="15" height="15" viewBox="0 0 15 15" aria-hidden="true">
                    <path d="M1.500 14V8c0-4 3-6.500 7-6.500h5" fill="none" stroke="#000" />
                    <path d="M4.500 13.500V9c0-3 2-4.500 5-4.500h4v9z" fill="#b7b7dc" stroke="#000" />
                  </svg>
                  <select id="operation"><option>Fillet</option></select>
                  <DropArrow><Arrow /></DropArrow>
                </SelectBox>
                <label htmlFor="radius"><u>R</u>adius:</label>
                <Spin $width={92}>
                  <input id="radius" defaultValue="10,0 mm" />
                  <SpinArrows />
                </Spin>
                <PushButton><span>Apply</span></PushButton>
              </FilletForm>
            </DockBody>
          </DockSection>
          <DockSection $grow>
            <Header title="Transformation" up />
            <DockBody $grow>
              <TransformBody>
                <ModeRow>
                  {modes.map(([label, art]) => (
                    <ModeButton key={label} aria-label={label} $active={label === 'Size'}><Icon size={16}>{art}</Icon></ModeButton>
                  ))}
                </ModeRow>
                Size:
                <SizeRow $first>
                  <label htmlFor="size-h">H:</label>
                  <Spin $width={90} $off><input id="size-h" defaultValue="0,0" disabled /><SpinArrows off /></Spin>
                  <span>mm</span>
                </SizeRow>
                <SizeRow>
                  <label htmlFor="size-v">V:</label>
                  <Spin $width={90} $off><input id="size-v" defaultValue="0,0" disabled /><SpinArrows off /></Spin>
                  <span>mm</span>
                </SizeRow>
                <Check>
                  <CheckBox>
                    <Box type="checkbox" defaultChecked disabled />
                    <svg width="9" height="9"><path d="M1 4l2.500 3L8 1.500" stroke="#b9b7aa" strokeWidth="2" fill="none" /></svg>
                  </CheckBox>
                  Non-proportional
                </Check>
                <AnchorRow>
                  <AnchorGrid>
                    {anchorCells.map((kind, n) => <AnchorCell key={n} kind={kind} index={n} />)}
                  </AnchorGrid>
                  <svg width="40" height="40" viewBox="0 0 40 40" aria-hidden="true">
                    <defs>
                      <linearGradient id="cloth" x1="0" y1="0" x2="1" y2="1">
                        <stop offset="0" stopColor="#e4e4fa" />
                        <stop offset=".6" stopColor="#9696cc" />
                        <stop offset="1" stopColor="#ececfc" />
                      </linearGradient>
                    </defs>
                    <rect x="5.500" y="6.500" width="28" height="28" fill="url(#cloth)" stroke="#6868a8" />
                    <path d="M7 10.500h25M7 16.500h25M7 25.500h25M7 30.500h25M10.500 8v25M16.500 8v25M24.500 8v25M29.500 8v25" stroke="#565690" strokeDasharray="2 1" />
                    <path d="M19.500 2v37M1 20.500h37" stroke="#3c3c4c" />
                    <path d="M19.500 1l3 3h-6zM19.500 40l3-3h-6zM0 20.500l3-3v6zM39 20.500l-3-3v6z" fill="#3c3c4c" />
                  </svg>
                </AnchorRow>
                <PushButton disabled>Apply To Duplicate</PushButton>
                <PushButton disabled>Apply</PushButton>
              </TransformBody>
            </DockBody>
          </DockSection>
        </Docker>
      </Main>
      <PaletteBar>
        <Grip />
        <PaletteMenu aria-label="Palette menu">
          <svg width="13" height="15" viewBox="0 0 13 15" fill="none" stroke="#000">
            <path d="M.5.5h12v14H.5zM2.500 3.500h3v3h-3zM2.500 9.500h3v3h-3zM7 4.500h4M7 6.500h4" /><path d="M11 8v5H6z" fill="#000" />
          </svg>
        </PaletteMenu>
        <ScrollButton disabled aria-label="Previous colors"><Arrow dir="left" /></ScrollButton>
        <NoColor aria-label="No color"><Cross size={15} w={0.7} /></NoColor>
        <Swatches>
          {colors.map((c) => <Swatch key={c} $color={c} aria-label={c} />)}
        </Swatches>
        <ScrollButton aria-label="Next colors"><Arrow dir="right" /></ScrollButton>
        <PaletteEnd aria-label="Expand palette">
          <svg width="8" height="7"><path d="M0 0h8v1H0zM0 6l4-4 4 4v1H0z" /></svg>
        </PaletteEnd>
      </PaletteBar>
      <StatusBar>
        <span>Selected: 2 Nodes</span>
        <span>Curve: 5 Nodes</span>
        <Fill $color="#fff">
          <Icon size={16}><Bucket /></Icon>
          None
          <i><svg width="30" height="15"><path d="M5 2l20 11M25 2L5 13" stroke="#000" /></svg></i>
        </Fill>
        <Hint>
          <span>( -103,361; 288,991 )</span>
          <span>Dbl-click tool selects all nodes on the selected object; Shift+click multi-selects; dbl-clicking on a curve adds a node; dbl-clicking on a node remo...</span>
        </Hint>
        <Fill $color="#26221e">
          <Icon size={16}><Nib /></Icon>
          Black&nbsp; Hairline
          <i />
        </Fill>
      </StatusBar>
    </Shell>
  </>
);

export default App;
